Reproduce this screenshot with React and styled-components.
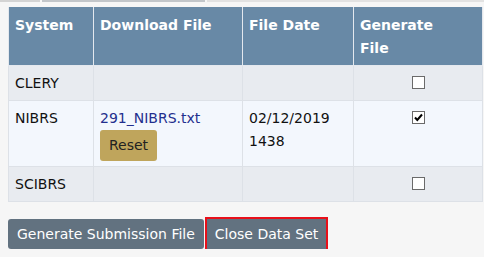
import React from "react";
import styled, { createGlobalStyle } from "styled-components";

const Global = createGlobalStyle`
  html, body { margin: 0; padding: 0; background: #f6f6f6; }
  body { font-family: "DejaVu Sans", Verdana, sans-serif; font-size: 14px; color: #111; }
`;

const Page = styled.div`
  padding: 0 2px 0 8px;
`;

const TopStrip = styled.div`
  height: 2px;
  margin-left: -8px;
  margin-right: -2px;
  margin-bottom: 5px;
  display: flex;
  gap: 2px;
`;

const StripSeg = styled.div`
  height: 2px;
  background: ${(p) => p.$c};
  flex: ${(p) => p.$flex};
`;

const Table = styled.table`
  border-collapse: collapse;
  width: 474px;
  table-layout: fixed;
  line-height: 23px;
`;

const Th = styled.th`
  background: #6889a6;
  color: #fff;
  font-weight: bold;
  text-align: left;
  vertical-align: top;
  padding: 7px ${(p) => (p.$wrap ? "40px" : "6px")} 5px 6px;
  border: 1px solid #e4e8ee;
  border-top: none;
`;

const Row = styled.tr`
  background: ${(p) => (p.$alt ? "#f3f7fd" : "#e8ebf0")};
`;

const Td = styled.td`
  vertical-align: top;
  padding: 6px 6px 5px;
  border: 1px solid #dde1e7;
  text-align: ${(p) => (p.$center ? "center" : "left")};
`;

const Link = styled.a`
  color: #232f8e;
  text-decoration: none;
`;

const ResetButton = styled.button`
  display: block;
  font: inherit;
  color: #222;
  background: #bfa55c;
  border: none;
  border-radius: 3px;
  height: 31px;
  padding: 0 9px;
  line-height: 31px;
`;

const Box = styled.span`
  display: inline-block;
  width: 11px;
  height: 11px;
  border: 1px solid #6a6a6a;
  background: #fff;
  vertical-align: -1px;
  position: relative;
`;

const Actions = styled.div`
  display: flex;
  gap: 1px;
  margin-top: 17px;
`;

const ActionButton = styled.button`
  font: inherit;
  color: #fff;
  background: #627280;
  border: none;
  height: 30px;
  padding: 0 ${(p) => (p.$focused ? "8px" : "9px")};
  margin: 0 ${(p) => (p.$focused ? "2px" : "0")};
  outline: ${(p) => (p.$focused ? "2px solid #e8101a" : "none")};
  outline-offset: 0;
  border-radius: ${(p) => (p.$focused ? "0" : "3px")};
`;

function Check({ checked }) {
  return (
    <Box>
      {checked && (
        <svg width="11" height="11" viewBox="0 0 11 11" style={{ position: "absolute", left: 0, top: 0 }}>
          <path d="M2 5.5 L4.3 8 L9 2.5" fill="none" stroke="#000" strokeWidth="2" />
        </svg>
      )}
    </Box>
  );
}

export default function App() {
  return (
    <Page>
      <Global />
      <TopStrip>
        <StripSeg $c="#d4d4d4" $flex="0 0 40px" />
        <StripSeg $c="#c2c6ca" $flex="0 0 163px" />
        <StripSeg $c="#e2e2e2" $flex="1" />
      </TopStrip>
      <Table>
        <colgroup>
          <col style={{ width: 85 }} />
          <col style={{ width: 149 }} />
          <col style={{ width: 111 }} />
          <col style={{ width: 129 }} />
        </colgroup>
        <thead>
          <tr>
            <Th>System</Th>
            <Th>Download File</Th>
            <Th>File Date</Th>
            <Th $wrap>Generate File</Th>
          </tr>
        </thead>
        <tbody>
          <Row>
            <Td>CLERY</Td>
            <Td></Td>
            <Td></Td>
            <Td $center><Check /></Td>
          </Row>
          <Row $alt>
            <Td>NIBRS</Td>
            <Td>
              <Link href="#">291_NIBRS.txt</Link>
              <ResetButton>Reset</ResetButton>
            </Td>
            <Td>
              02/12/2019
              <br />
              1438
            </Td>
            <Td $center><Check checked /></Td>
          </Row>
          <Row>
            <Td>SCIBRS</Td>
            <Td></Td>
            <Td></Td>
            <Td $center><Check /></Td>
          </Row>
        </tbody>
      </Table>
      <Actions>
        <ActionButton>Generate Submission File</ActionButton>
        <ActionButton $focused>Close Data Set</ActionButton>
      </Actions>
    </Page>
  );
}
